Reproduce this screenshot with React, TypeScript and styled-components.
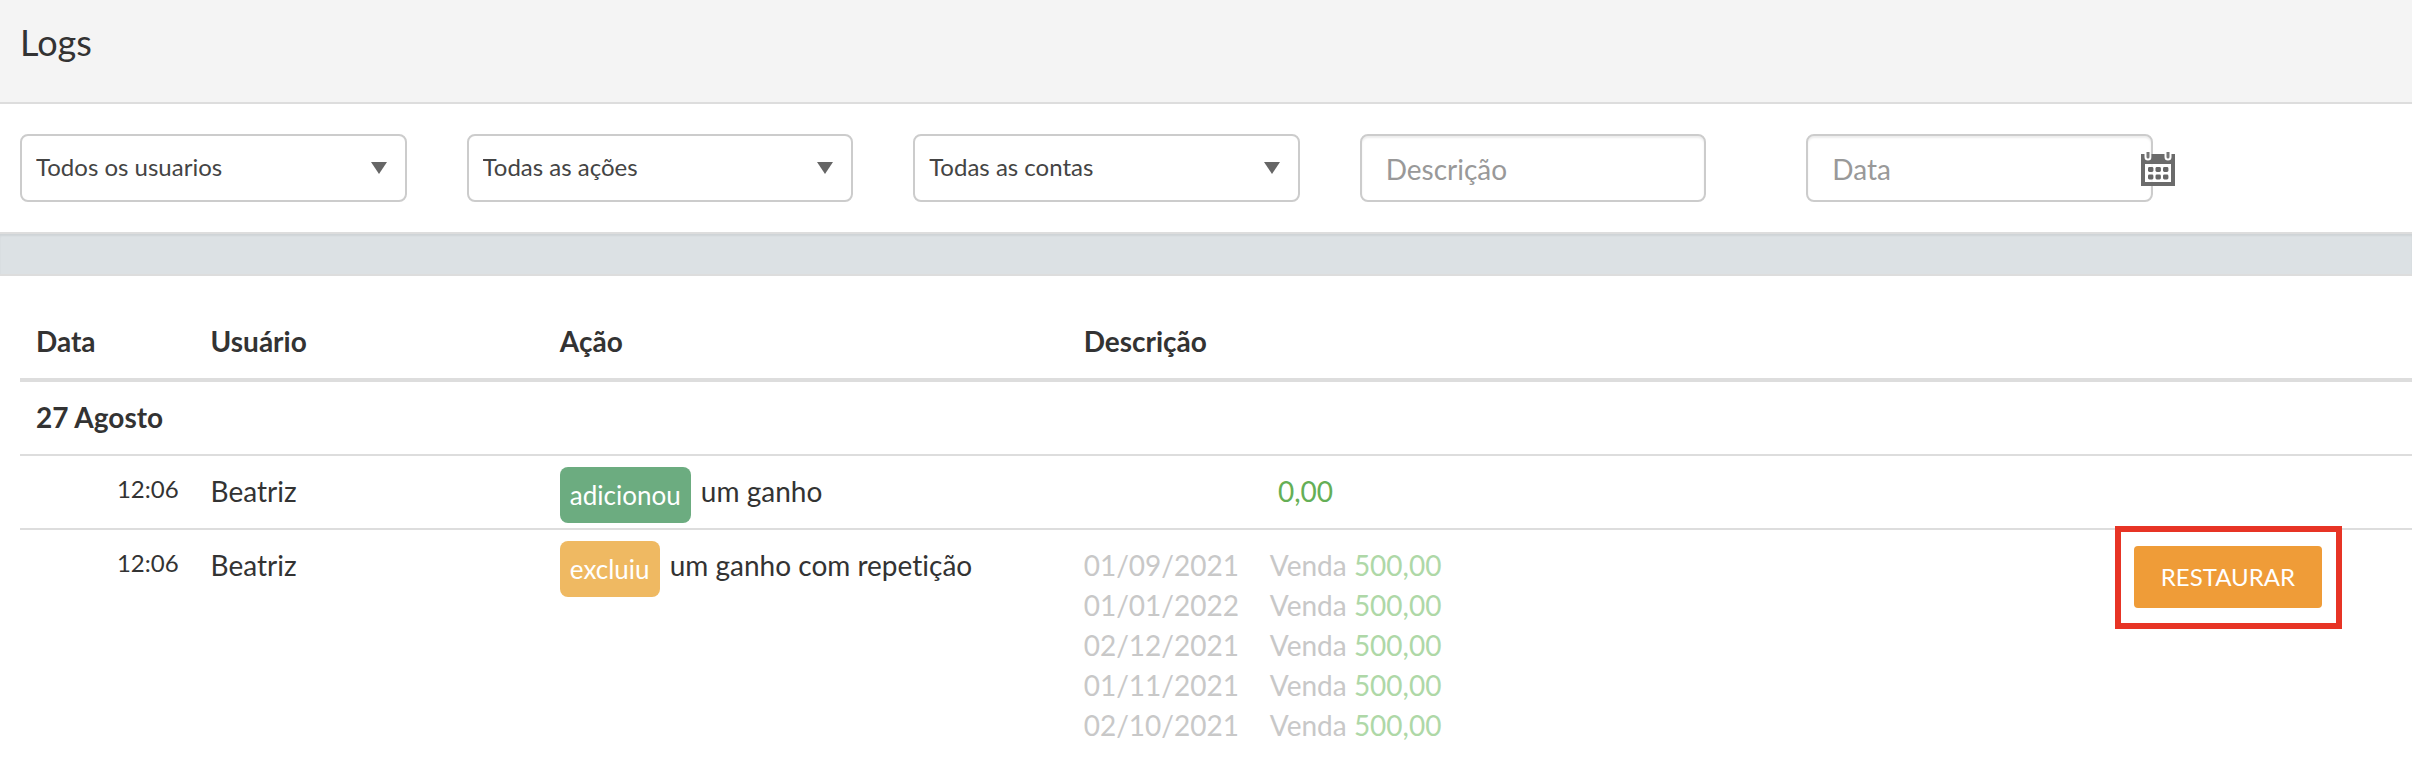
import React from "react";
import styled, { createGlobalStyle } from "styled-components";

const GlobalStyle = createGlobalStyle`
  *, *::before, *::after { box-sizing: border-box; }
  body {
    margin: 0;
    background: #fff;
    color: #333;
    font-family: Lato, "Liberation Sans", sans-serif;
    font-size: 28px;
    line-height: 40px;
    font-variant-ligatures: none;
  }
`;

const Header = styled.header`
  padding: 20px 20px 38px;
  background: #f4f4f4;
  border-bottom: 2px solid #ddd;
`;

const Title = styled.h1`
  margin: 0;
  font-size: 36px;
  line-height: 44px;
  font-weight: 400;
`;

const Filters = styled.form`
  display: grid;
  grid-template-columns: repeat(5, minmax(0, 17fr)) minmax(0, 7fr);
  column-gap: 60px;
  padding: 30px 0 30px 20px;
`;

const SelectBox = styled.div`
  position: relative;
`;

const Select = styled.select`
  display: block;
  width: 100%;
  height: 68px;
  padding: 0 48px 4px 14px;
  appearance: none;
  border: 2px solid #ccc;
  border-radius: 8px;
  background: #fff;
  color: #444;
  font-family: inherit;
  font-size: 24px;
`;

const Arrow = styled.svg`
  position: absolute;
  top: 28px;
  right: 20px;
  width: 16px;
  height: 12px;
  fill: #666;
  pointer-events: none;
`;

const Field = styled.div`
  display: flex;
  align-items: center;
  padding-right: 40px;
`;

const TextInput = styled.input`
  flex: none;
  width: 100%;
  height: 68px;
  padding: 2px 24px 0;
  border: 2px solid #ccc;
  border-radius: 8px;
  background: #fff;
  box-shadow: inset 0 2px 2px rgba(0, 0, 0, 0.075);
  color: #555;
  font-family: inherit;
  font-size: 28px;
  &::placeholder { color: #999; opacity: 1; }
`;

const CalendarSvg = styled.svg`
  flex: none;
  width: 34px;
  height: 34px;
  margin: 2px 0 0 -12px;
  z-index: 1;
`;

const Divider = styled.div`
  height: 44px;
  background: #dce1e4;
  border-top: 2px solid #ddd;
  border-bottom: 2px solid #ddd;
  box-shadow: inset 0 2px 2px rgba(0, 0, 0, 0.06);
`;

const Content = styled.main`
  padding: 30px 0 0 20px;
`;

const Table = styled.table`
  width: 100%;
  table-layout: fixed;
  border-collapse: separate;
  border-spacing: 0;
`;

const Col = styled.col<{ $share?: number }>`
  width: ${(p) => (p.$share ? `${p.$share}%` : "auto")};
`;

const HeadCell = styled.th`
  padding: 15px 16px 17px;
  border-bottom: 4px solid #ddd;
  font-weight: 700;
  text-align: left;
`;

const DayCell = styled.th`
  padding: 15px 16px 17px;
  font-weight: 700;
  text-align: left;
`;

const Cell = styled.td`
  padding: 15px 16px 17px;
  border-top: 2px solid #ddd;
  vertical-align: top;
  white-space: nowrap;
`;

const TimeCell = styled(Cell)`
  font-size: 24px;
  line-height: 36px;
  text-align: right;
`;

const ButtonCell = styled(Cell)`
  padding-top: 16px;
`;

const Badge = styled.span<{ $color: string }>`
  margin-right: 3px;
  padding: 12px 10px;
  border-radius: 8px;
  background: ${(p) => p.$color};
  color: #fff;
  font-size: 26px;
  line-height: 1;
  vertical-align: -3px;
`;

const Entry = styled.div<{ $faded?: boolean }>`
  color: ${(p) => (p.$faded ? "#c8c8c8" : "#333")};
  white-space: pre;
`;

const EntryDate = styled.span`
  display: inline-block;
  width: 180px;
  height: 40px;
  vertical-align: top;
`;

const Amount = styled.span<{ $faded?: boolean }>`
  color: ${(p) => (p.$faded ? "#aed8a7" : "#65af56")};
`;

const Highlight = styled.div`
  position: relative;
  display: inline-block;
  vertical-align: top;
  &::after {
    content: "";
    position: absolute;
    inset: -20px -20px -21px -19px;
    border: 6px solid #e73425;
    pointer-events: none;
  }
`;

const RestoreButton = styled.button`
  display: block;
  height: 62px;
  padding: 0 27px 2px;
  border: 0;
  border-radius: 4px;
  background: #ef9c38;
  color: #fff;
  font-family: inherit;
  font-size: 24px;
`;

function FilterSelect({ label, option }: { label: string; option: string }) {
  return (
    <SelectBox>
      <Select aria-label={label}>
        <option>{option}</option>
      </Select>
      <Arrow viewBox="0 0 16 12" aria-hidden="true">
        <path d="M0 0h16L8 12z" />
      </Arrow>
    </SelectBox>
  );
}

function CalendarIcon() {
  return (
    <CalendarSvg viewBox="0 0 34 34" aria-hidden="true">
      <path
        fill="#6b6b6b"
        fillRule="evenodd"
        d="M0 2h3.5v3a3.5 3.5 0 0 0 7 0V2h13v3a3.5 3.5 0 0 0 7 0V2H34v32H0zM4 12h26v18H4z"
      />
      <path fill="#fff" fillOpacity=".85" d="M4 12h26v18H4z" />
      <path fill="#777" d="M5.5 0h3v5a1.5 1.5 0 0 1-3 0zM25.5 0h3v5a1.5 1.5 0 0 1-3 0z" />
      <g fill="#666">
        {[7, 14.5, 22].map((x) =>
          [15, 22.5].map((y) => <rect key={`${x}-${y}`} x={x} y={y} width="5.4" height="5" rx="1.4" />)
        )}
      </g>
    </CalendarSvg>
  );
}

const deletedDates = ["01/09/2021", "01/01/2022", "02/12/2021", "01/11/2021", "02/10/2021"];

export default function App() {
  return (
    <>
      <GlobalStyle />
      <Header>
        <Title>Logs</Title>
      </Header>
      <Filters>
        <FilterSelect label="Usuário" option="Todos os usuarios" />
        <FilterSelect label="Ação" option="Todas as ações" />
        <FilterSelect label="Conta" option="Todas as contas" />
        <Field>
          <TextInput type="text" aria-label="Descrição" placeholder="Descrição" />
        </Field>
        <Field>
          <TextInput type="text" aria-label="Data" placeholder="Data" />
          <CalendarIcon />
        </Field>
      </Filters>
      <Divider />
      <Content>
        <Table>
          <colgroup>
            <Col $share={7.3} />
            <Col $share={14.6} />
            <Col $share={21.9} />
            <Col />
            <Col $share={12.3} />
          </colgroup>
          <thead>
            <tr>
              <HeadCell scope="col">Data</HeadCell>
              <HeadCell scope="col">Usuário</HeadCell>
              <HeadCell scope="col">Ação</HeadCell>
              <HeadCell scope="col" colSpan={2}>Descrição</HeadCell>
            </tr>
          </thead>
          <tbody>
            <tr>
              <DayCell scope="rowgroup" colSpan={5}>27 Agosto</DayCell>
            </tr>
            <tr>
              <TimeCell>12:06</TimeCell>
              <Cell>Beatriz</Cell>
              <Cell>
                <Badge $color="#6cac80">adicionou</Badge> um ganho
              </Cell>
              <Cell colSpan={2}>
                <Entry>
                  <EntryDate />
                  {"  "}
                  <Amount>0,00</Amount>
                </Entry>
              </Cell>
            </tr>
            <tr>
              <TimeCell>12:06</TimeCell>
              <Cell>Beatriz</Cell>
              <Cell>
                <Badge $color="#efb962">excluiu</Badge> um ganho com repetição
              </Cell>
              <Cell>
                {deletedDates.map((date) => (
                  <Entry key={date} $faded>
                    <EntryDate>{date}</EntryDate> Venda <Amount $faded>500,00</Amount>
                  </Entry>
                ))}
              </Cell>
              <ButtonCell>
                <Highlight>
                  <RestoreButton type="button">RESTAURAR</RestoreButton>
                </Highlight>
              </ButtonCell>
            </tr>
          </tbody>
        </Table>
      </Content>
    </>
  );
}
